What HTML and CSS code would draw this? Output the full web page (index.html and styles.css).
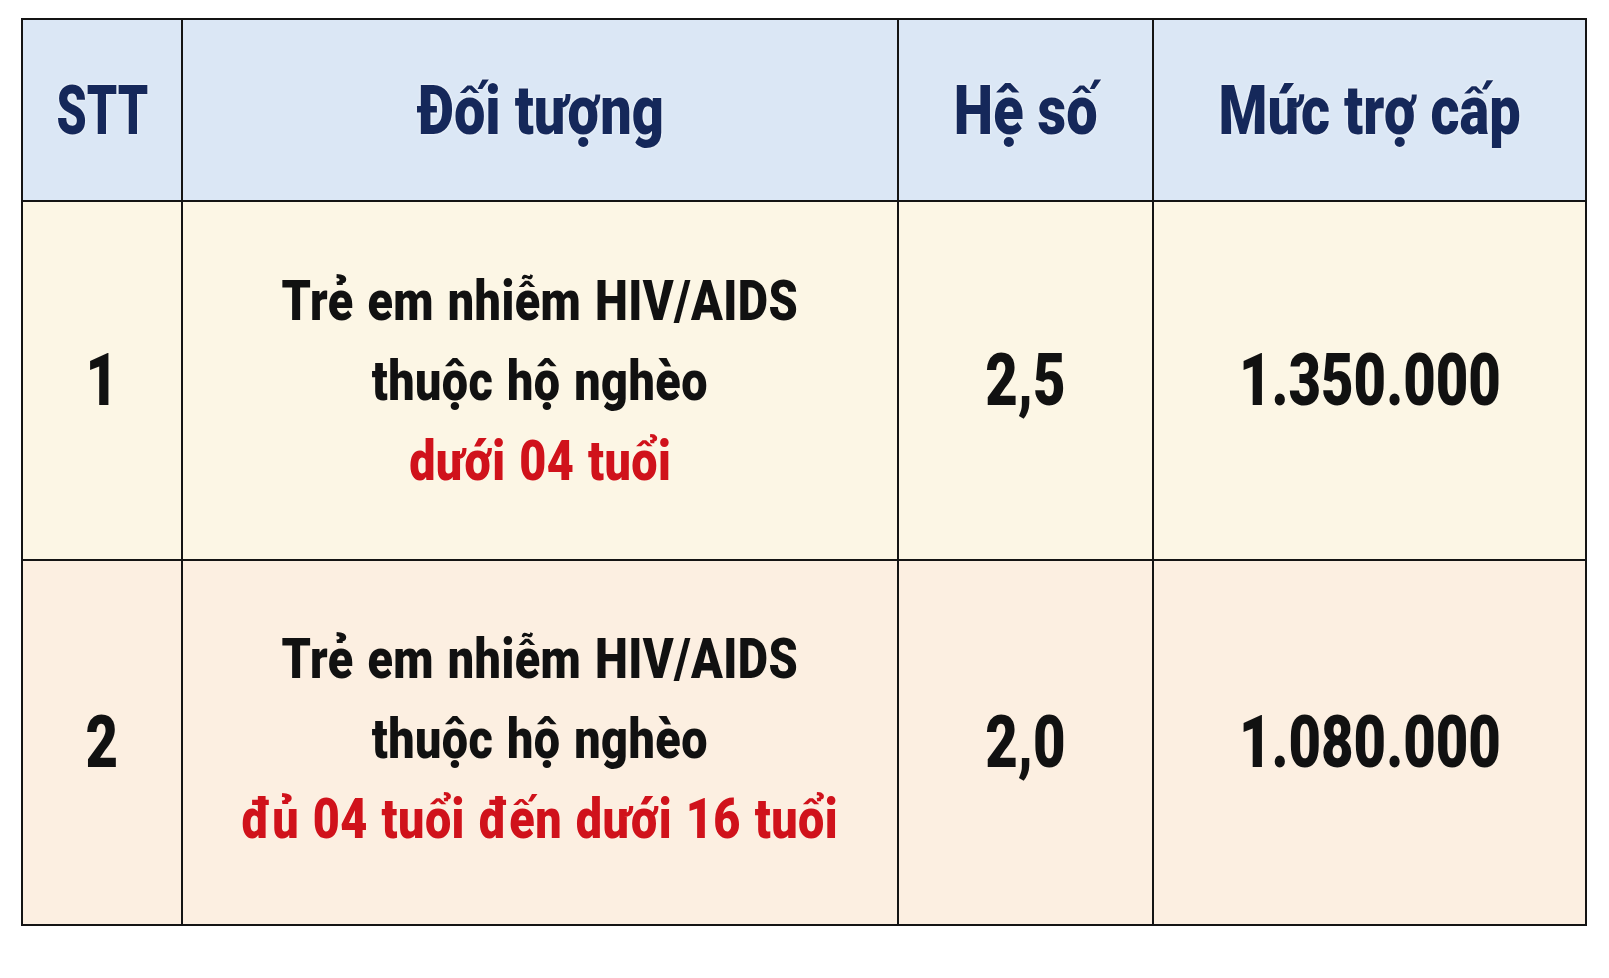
FILE: index.html
```html
<!DOCTYPE html>
<html lang="vi">
<head>
<meta charset="utf-8">
<title>Mức trợ cấp</title>
<link rel="stylesheet" href="styles.css">
</head>
<body>
<div class="table">
  <div class="cell head"><span class="t narrow">STT</span></div>
  <div class="cell head"><span class="t">Đối tượng</span></div>
  <div class="cell head"><span class="t">Hệ số</span></div>
  <div class="cell head"><span class="t">Mức trợ cấp</span></div>

  <div class="cell r1 num"><span class="t">1</span></div>
  <div class="cell r1 desc">
    <span class="t">Trẻ em nhiễm HIV/AIDS</span>
    <span class="t">thuộc hộ nghèo</span>
    <span class="t red">dưới 04 tuổi</span>
  </div>
  <div class="cell r1 num"><span class="t">2,5</span></div>
  <div class="cell r1 num"><span class="t">1.350.000</span></div>

  <div class="cell r2 num"><span class="t">2</span></div>
  <div class="cell r2 desc">
    <span class="t">Trẻ em nhiễm HIV/AIDS</span>
    <span class="t">thuộc hộ nghèo</span>
    <span class="t red">đủ 04 tuổi đến dưới 16 tuổi</span>
  </div>
  <div class="cell r2 num"><span class="t">2,0</span></div>
  <div class="cell r2 num"><span class="t">1.080.000</span></div>
</div>
</body>
</html>
```

FILE: styles.css
```css
html, body {
  margin: 0;
  padding: 0;
  background: #ffffff;
}

body {
  padding: 18px 0 0 21px;
  font-family: "Roboto", "Liberation Sans", sans-serif;
  font-weight: 900;
}

.table {
  display: grid;
  grid-template-columns: 158px 714px 253px 431px;
  grid-template-rows: 180px 357px 363px;
  gap: 2px;
  padding: 2px;
  background: #141414;
  width: max-content;
}

.cell {
  display: flex;
  align-items: center;
  justify-content: center;
  text-align: center;
}

.t {
  display: block;
  white-space: nowrap;
  transform: scaleX(0.78);
}

.head {
  background: #dbe7f5;
  color: #15285a;
  font-size: 69px;
  text-shadow: 0 0 3px rgba(255, 255, 255, 0.9);
}

.head .t {
  transform: scaleX(0.81);
}

.head .narrow {
  transform: scaleX(0.7);
}

.r1 {
  background: #fcf6e5;
}

.r2 {
  background: #fcefe1;
}

.num {
  color: #111111;
  font-size: 72px;
}

.desc {
  flex-direction: column;
  color: #111111;
  font-size: 55px;
  line-height: 80px;
}

.r2.desc {
  padding-bottom: 8px;
}

.desc .t {
  transform: scaleX(0.85);
  letter-spacing: 0.5px;
  word-spacing: 2px;
}

.red {
  color: #d0121b;
}
```
